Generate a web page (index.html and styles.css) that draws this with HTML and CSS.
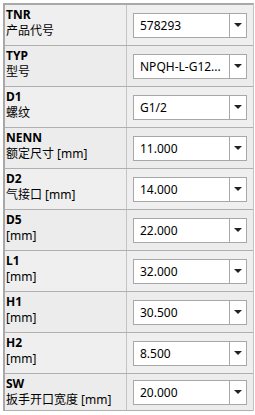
FILE: index.html
```html
<!DOCTYPE html>
<html lang="zh">
<head>
  <meta charset="UTF-8">
  <meta name="viewport" content="width=device-width, initial-scale=1.0">
  <title>参数</title>
  <link rel="stylesheet" href="styles.css">
</head>
<body>
  <div id="props">
    <div class="row">
      <div class="label"><b>TNR</b><span>产品代号</span></div>
      <div class="cell"><div class="combo"><span class="val">578293</span><span class="arrow"></span></div></div>
    </div>
    <div class="row">
      <div class="label"><b>TYP</b><span>型号</span></div>
      <div class="cell"><div class="combo"><span class="val">NPQH-L-G12...</span><span class="arrow"></span></div></div>
    </div>
    <div class="row">
      <div class="label"><b>D1</b><span>螺纹</span></div>
      <div class="cell"><div class="combo"><span class="val">G1/2</span><span class="arrow"></span></div></div>
    </div>
    <div class="row">
      <div class="label"><b>NENN</b><span>额定尺寸 [mm]</span></div>
      <div class="cell"><div class="combo"><span class="val">11.000</span><span class="arrow"></span></div></div>
    </div>
    <div class="row">
      <div class="label"><b>D2</b><span>气接口 [mm]</span></div>
      <div class="cell"><div class="combo"><span class="val">14.000</span><span class="arrow"></span></div></div>
    </div>
    <div class="row">
      <div class="label"><b>D5</b><span>[mm]</span></div>
      <div class="cell"><div class="combo"><span class="val">22.000</span><span class="arrow"></span></div></div>
    </div>
    <div class="row">
      <div class="label"><b>L1</b><span>[mm]</span></div>
      <div class="cell"><div class="combo"><span class="val">32.000</span><span class="arrow"></span></div></div>
    </div>
    <div class="row">
      <div class="label"><b>H1</b><span>[mm]</span></div>
      <div class="cell"><div class="combo"><span class="val">30.500</span><span class="arrow"></span></div></div>
    </div>
    <div class="row">
      <div class="label"><b>H2</b><span>[mm]</span></div>
      <div class="cell"><div class="combo"><span class="val">8.500</span><span class="arrow"></span></div></div>
    </div>
    <div class="row">
      <div class="label"><b>SW</b><span>扳手开口宽度 [mm]</span></div>
      <div class="cell"><div class="combo"><span class="val">20.000</span><span class="arrow"></span></div></div>
    </div>
  </div>
</body>
</html>
```

FILE: styles.css
```css
body{
  margin: 0;
  background-color: white;
  font-family: "Noto Sans", "Noto Sans CJK SC", sans-serif;
  font-size: 12px;
  color: black;
}
/* 属性表 */
#props{
  margin: 3px 0 0 3px;
  width: 248px;
  border-top: 2px solid #a9a9a9;
  border-left: 2px solid #a9a9a9;
  border-right: 1px solid #c4c4c4;
}
.row{
  display: grid;
  grid-template-columns: 122px minmax(0, 1fr);
  height: 40px;
  border-bottom: 1px solid #b0b0b0;
  background-color: #ececec;
}
.row:nth-child(odd){
  background-color: #efefef;
}
.row:last-child{
  height: 36px;
}
.label{
  display: flex;
  flex-direction: column;
  padding: 2px 0 0 1px;
  line-height: 16px;
  border-right: 1px solid #c4c4c4;
  white-space: nowrap;
}
.label b{
  font-weight: bold;
  font-size: 12px;
}
.cell{
  display: flex;
  align-items: center;
  padding: 0 6px;
  min-width: 0;
}
.combo{
  display: flex;
  width: 100%;
  min-width: 0;
  height: 25px;
  box-sizing: border-box;
  border: 1px solid #a8a8a8;
  background-color: white;
}
.val{
  flex: 1;
  min-width: 0;
  padding-left: 6px;
  line-height: 23px;
  white-space: nowrap;
}
.arrow{
  flex: none;
  width: 16px;
  border-left: 1px solid #a8a8a8;
  display: flex;
  align-items: center;
  justify-content: center;
}
.arrow::after{
  content: "";
  border-left: 4px solid transparent;
  border-right: 4px solid transparent;
  border-top: 4px solid #222;
}
```
